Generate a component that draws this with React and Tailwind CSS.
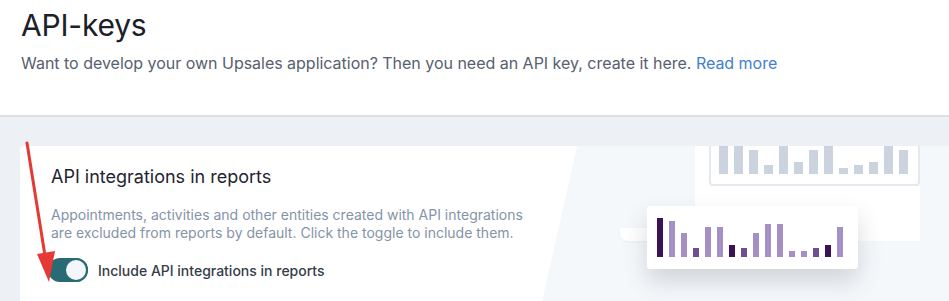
const bigBars = [40, 40, 24, 9, 40, 12, 24, 40, 6, 9, 12, 40, 24];

const smallBars = [
  { h: 39, c: 'bg-[#3d1157]' },
  { h: 36, c: 'bg-[#a490c5]' },
  { h: 24, c: 'bg-[#a490c5]' },
  { h: 9, c: 'bg-[#6e4e8e]' },
  { h: 30, c: 'bg-[#a490c5]' },
  { h: 30, c: 'bg-[#a490c5]' },
  { h: 12, c: 'bg-[#3d1157]' },
  { h: 9, c: 'bg-[#6e4e8e]' },
  { h: 24, c: 'bg-[#a490c5]' },
  { h: 33, c: 'bg-[#a490c5]' },
  { h: 33, c: 'bg-[#a490c5]' },
  { h: 6, c: 'bg-[#a490c5]' },
  { h: 6, c: 'bg-[#a490c5]' },
  { h: 9, c: 'bg-[#6e4e8e]' },
  { h: 12, c: 'bg-[#3d1157]' },
  { h: 30, c: 'bg-[#a490c5]' }
];

function Illustration() {
  return (
    <div className="relative h-full flex-1 overflow-hidden bg-[#f5f8fb] [clip-path:polygon(36px_0,100%_0,100%_100%,0_100%)]">
      {/* faded chart panel */}
      <div className="absolute left-[154px] top-0 h-[95px] w-[225px] bg-white">
        <div className="absolute left-[14px] top-[-30px] flex h-[70px] w-[211px] items-end gap-[6px] rounded-b-[4px] border-2 border-[#e4e9ef] pb-[10px] pl-[8px]">
          {bigBars.map((h, i) => (
            <div key={i} className="w-[9px] bg-[#cbd3de]" style={{ height: h }} />
          ))}
        </div>
      </div>

      {/* card peeking behind */}
      <div className="absolute left-[79px] top-[82px] h-[13px] w-[90px] rounded-bl-[8px] bg-white shadow-[0_1px_3px_rgba(0,0,0,0.04)]" />

      {/* floating chart card */}
      <div className="absolute left-[106px] top-[60px] flex h-[63px] w-[211px] items-end gap-[6px] rounded-[3px] bg-white pb-[12px] pl-[10px] shadow-[0_12px_24px_rgba(40,50,60,0.18)]">
        {smallBars.map((b, i) => (
          <div key={i} className={`w-[6px] ${b.c}`} style={{ height: b.h }} />
        ))}
      </div>
    </div>
  );
}

function Toggle() {
  return (
    <div className="flex h-[24px] w-[40px] items-center justify-end rounded-full bg-[#286b74]">
      <div className="h-[24px] w-[24px] rounded-full border-2 border-[#286b74] bg-[#f3f7fb]" />
    </div>
  );
}

export default function App() {
  return (
    <div className="relative h-[301px] w-full overflow-hidden bg-[#edf0f5] font-['Inter',sans-serif]">
      <header className="h-[117px] border-b-2 border-[#dcdfe4] bg-white px-[21px] pt-[7px]">
        <h1 className="text-[30px] leading-[36px] font-normal tracking-[-0.2px] text-[#1c2028]">API-keys</h1>
        <p className="mt-[9px] text-[16px] leading-[22px] tracking-[-0.02px] text-[#56606e]">
          Want to develop your own Upsales application? Then you need an API key, create it here.{' '}
          <a className="text-[#3f80d2]">Read more</a>
        </p>
      </header>

      <div className="ml-[20px] mt-[29px] flex h-[160px] overflow-hidden rounded-tl-[4px] bg-white">
        <div className="w-[521px] flex-none pl-[31px] pt-[19px]">
          <h2 className="text-[18px] leading-[24px] text-[#1f2430]">API integrations in reports</h2>
          <p className="mt-[17px] w-[480px] text-[14px] leading-[18px] text-[#8593a8]">
            Appointments, activities and other entities created with API integrations are excluded from reports by default. Click the toggle to include them.
          </p>
          <div className="mt-[16px] flex items-center gap-[10px]">
            <div className="-ml-[3px]">
              <Toggle />
            </div>
            <span className="text-[14px] font-medium text-[#353c49]">Include API integrations in reports</span>
          </div>
        </div>
        <Illustration />
      </div>

      <svg className="pointer-events-none absolute left-0 top-0" width="949" height="301">
        <line x1="27" y1="143" x2="46" y2="262" stroke="#e53935" strokeWidth="3" strokeLinecap="round" />
        <polygon points="49,282 37,254 55,251" fill="#e53935" />
      </svg>
    </div>
  );
}
